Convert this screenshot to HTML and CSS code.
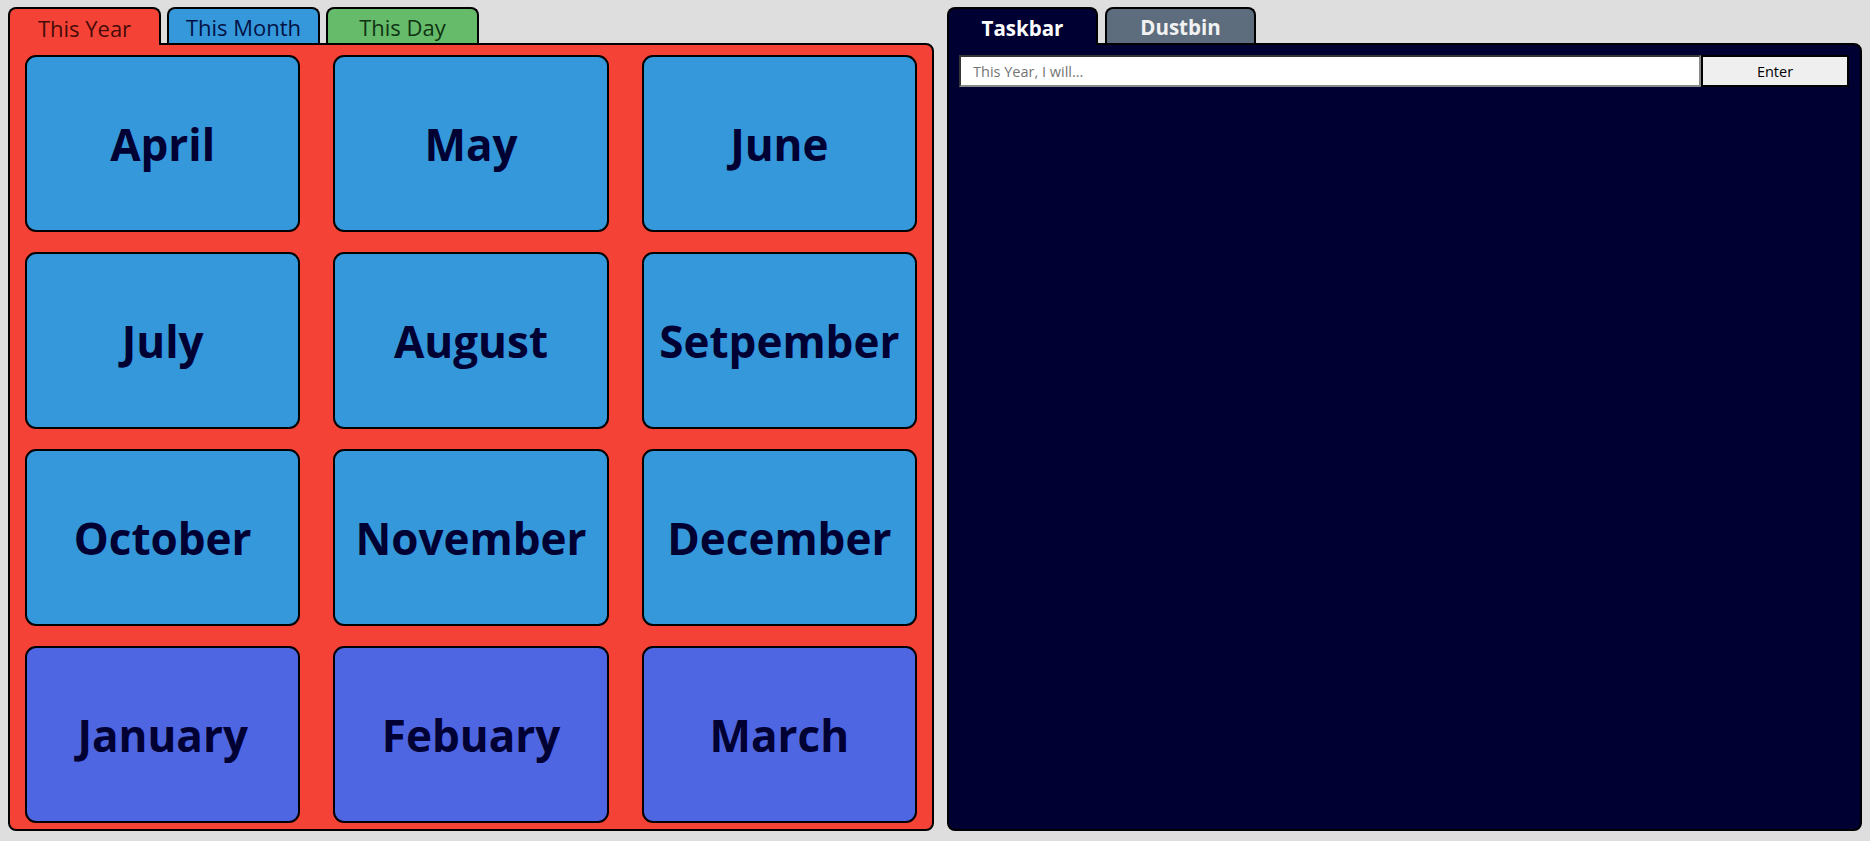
FILE: index.html
```html
<!DOCTYPE html>
<html lang="en">
<head>
<meta charset="utf-8">
<title>Planner</title>
<link rel="stylesheet" href="styles.css">
</head>
<body>
<div class="app">
  <section class="pane pane-year">
    <nav class="tabs">
      <div class="tab tab-year active">This Year</div>
      <div class="tab tab-month">This Month</div>
      <div class="tab tab-day">This Day</div>
    </nav>
    <div class="panel panel-red">
      <div class="months">
        <div class="month">April</div>
        <div class="month">May</div>
        <div class="month">June</div>
        <div class="month">July</div>
        <div class="month">August</div>
        <div class="month">Setpember</div>
        <div class="month">October</div>
        <div class="month">November</div>
        <div class="month">December</div>
        <div class="month month-q4">January</div>
        <div class="month month-q4">Febuary</div>
        <div class="month month-q4">March</div>
      </div>
    </div>
  </section>
  <section class="pane pane-tasks">
    <nav class="tabs tabs-right">
      <div class="tab tab-taskbar active">Taskbar</div>
      <div class="tab tab-dustbin">Dustbin</div>
    </nav>
    <div class="panel panel-navy">
      <form class="entry">
        <input class="entry-input" type="text" placeholder="This Year, I will...">
        <button class="entry-btn" type="button">Enter</button>
      </form>
    </div>
  </section>
</div>
</body>
</html>
```
FILE: styles.css
```css
html, body {
  margin: 0;
  height: 100%;
}
body {
  background: #dedede;
  font-family: "Open Sans", "Noto Sans", sans-serif;
}
.app {
  display: flex;
  gap: 13px;
  padding: 7px 8px 10px;
  height: 841px;
  box-sizing: border-box;
}
.pane {
  display: flex;
  flex-direction: column;
}
.pane-year {
  width: 926px;
}
.pane-tasks {
  flex: 1;
}
.tabs {
  display: flex;
  gap: 6px;
  height: 36px;
}
.tabs-right {
  gap: 7px;
}
.tab {
  width: 153px;
  height: 36px;
  box-sizing: border-box;
  border: 2px solid #000;
  border-bottom: none;
  border-radius: 8px 8px 0 0;
  display: flex;
  align-items: center;
  justify-content: center;
  font-size: 22px;
  padding-top: 2px;
}
.tab.active {
  height: 38px;
  margin-bottom: -2px;
  position: relative;
  z-index: 1;
}
.tab-year {
  background: #f44336;
  color: #460b08;
}
.tab-month {
  background: #3498db;
  color: #021245;
}
.tab-day {
  background: #66bb6a;
  color: #103312;
}
.tab-taskbar,
.tab-dustbin {
  width: 151px;
  font-weight: 700;
  font-size: 20.5px;
}
.tab-taskbar {
  background: #000033;
  color: #fff;
}
.tab-dustbin {
  background: #5d6d7e;
  color: #f2f2f2;
}
.panel {
  flex: 1;
  border: 2px solid #000;
  border-radius: 0 8px 8px 8px;
  box-sizing: border-box;
}
.panel-red {
  background: #f44336;
}
.panel-navy {
  background: #000033;
  padding: 10px 11px 10px 10px;
}
.months {
  height: 100%;
  box-sizing: border-box;
  display: grid;
  grid-template-columns: repeat(3, 1fr);
  grid-template-rows: repeat(4, 1fr);
  gap: 20px 33px;
  padding: 10px 15px 6px;
}
.month {
  background: #3498db;
  border: 2px solid #000;
  border-radius: 11px;
  display: flex;
  align-items: center;
  justify-content: center;
  font-weight: 700;
  font-size: 44px;
  color: #000033;
}
.month-q4 {
  background: #4f66e3;
}
.entry {
  display: flex;
  height: 32px;
  margin: 0;
}
.entry-input {
  flex: 1;
  box-sizing: border-box;
  height: 32px;
  margin: 0;
  border: 2px inset #8a8a8a;
  background: #fff;
  padding: 0 12px;
  font-family: "Open Sans", "Noto Sans", sans-serif;
  font-size: 14.5px;
  color: #222;
}
.entry-input::placeholder {
  color: #757575;
}
.entry-btn {
  width: 148px;
  height: 32px;
  box-sizing: border-box;
  margin: 0;
  background: #efefef;
  border: 2px solid #000;
  font-family: "Open Sans", "Noto Sans", sans-serif;
  font-size: 14.5px;
  color: #000;
}
```
